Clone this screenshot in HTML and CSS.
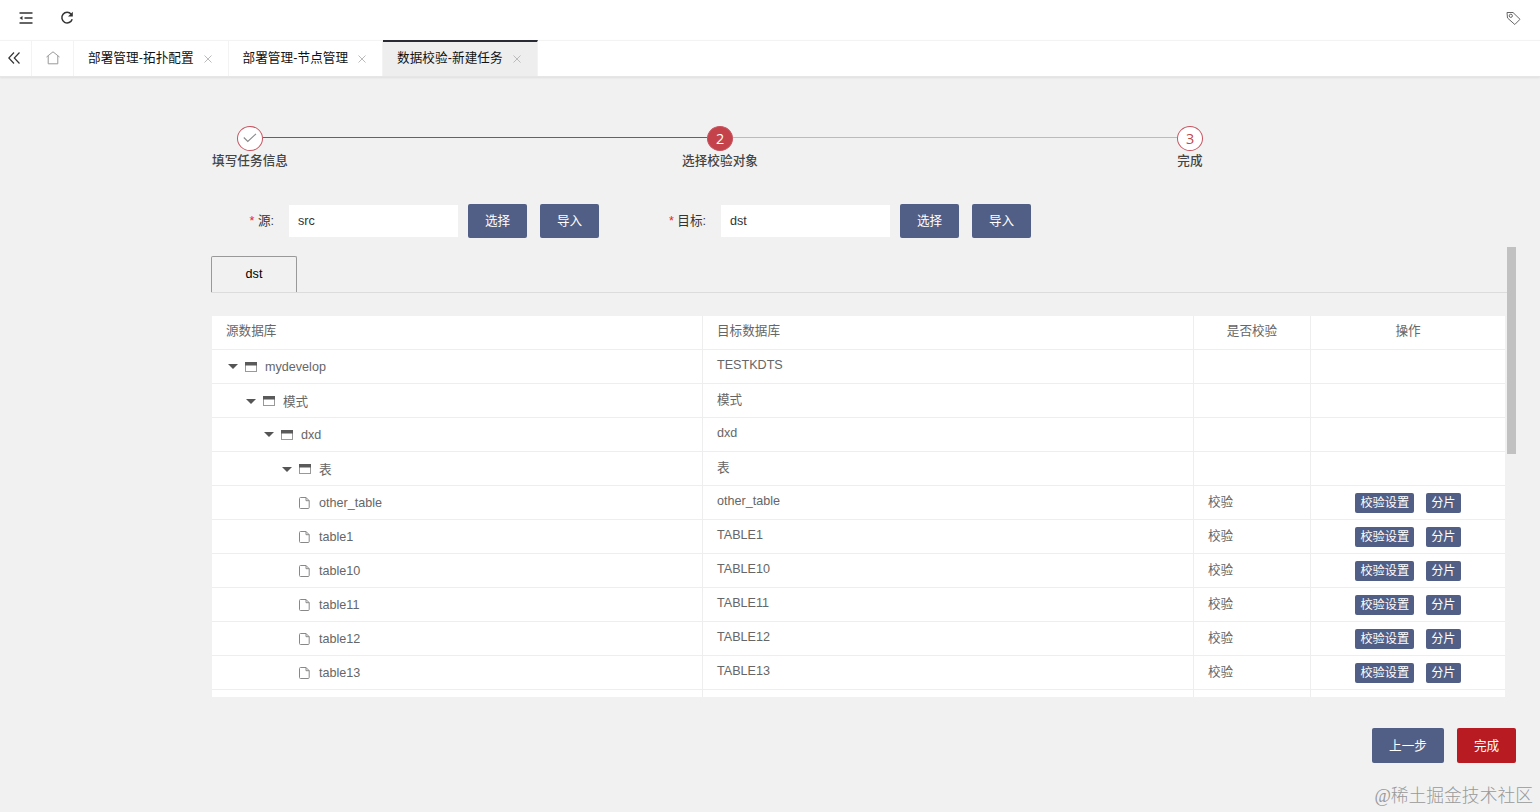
FILE: index.html
```html
<!DOCTYPE html>
<html lang="zh-CN">
<head>
    <meta charset="UTF-8">
    <meta name="viewport" content="width=device-width, initial-scale=1.0">
    <title>数据校验-新建任务</title>
    <link rel="stylesheet" href="styles.css">
</head>
<body>
    <!-- shared icons -->
    <svg class="sprite" width="0" height="0">
        <symbol id="icon-folder" viewBox="0 0 12 10">
            <rect x="0.5" y="0.5" width="11" height="9" fill="none" stroke="#999"/>
            <rect x="0" y="0" width="12" height="3.5" fill="#5a5a5a"/>
        </symbol>
        <symbol id="icon-file" viewBox="0 0 11 12">
            <path d="M1.5 .5H7L10.2 3.7V10.5Q10.2 11.5 9.2 11.5H1.5Q.5 11.5 .5 10.5V1.5Q.5 .5 1.5 .5ZM7 .5V3.7H10.2" fill="none" stroke="#888"/>
        </symbol>
        <symbol id="icon-close" viewBox="0 0 8 8">
            <path d="M.5 .5L7.5 7.5M7.5 .5L.5 7.5" fill="none" stroke="#bbb"/>
        </symbol>
    </svg>

    <header class="header">
        <svg class="icon-menu" width="14" height="12" viewBox="0 0 14 12"><path d="M.5 1H13.5M5.5 6H13.5M.5 11H13.5" fill="none" stroke="#333" stroke-width="1.4"/><path d="M.5 6L3.5 4V8Z" fill="#333"/></svg>
        <svg class="icon-refresh" width="14" height="14" viewBox="0 0 14 14"><path d="M11.2 3.2A5.3 5.3 0 1 0 12.2 8.3" fill="none" stroke="#333" stroke-width="1.5"/><path d="M12.8 .8V5.6H8Z" fill="#333"/></svg>
        <svg class="icon-tag" width="15" height="15" viewBox="0 0 15 15"><path d="M1 1.5H7L14 8.3L8.8 13.5L1.5 7Z" fill="none" stroke="#666" stroke-linejoin="round"/><circle cx="4.8" cy="4.8" r="1.6" fill="none" stroke="#666"/></svg>
    </header>

    <nav class="page-tabs">
        <a class="tab-control"><svg width="12" height="12" viewBox="0 0 12 12"><path d="M6 .5L.8 6L6 11.5M11.5 .5L6.3 6L11.5 11.5" fill="none" stroke="#333" stroke-width="1.2"/></svg></a>
        <a class="tab-home"><svg width="14" height="14" viewBox="0 0 14 14"><path d="M.5 6L7 .8L13.5 6M2.2 5V12.8H11.8V5" fill="none" stroke="#999"/></svg></a>
        <a class="page-tab">部署管理-拓扑配置<svg class="close"><use href="#icon-close"/></svg></a>
        <a class="page-tab">部署管理-节点管理<svg class="close"><use href="#icon-close"/></svg></a>
        <a class="page-tab active">数据校验-新建任务<svg class="close"><use href="#icon-close"/></svg></a>
    </nav>

    <main>
        <div class="steps">
            <div class="step">
                <span class="step-num"><svg width="14" height="10" viewBox="0 0 14 10"><path d="M.8 4.5L4.8 8.5L13 .8" fill="none" stroke="#888" stroke-width="1.1"/></svg></span>
                <span class="step-title">填写任务信息</span>
            </div>
            <div class="step-line done"></div>
            <div class="step">
                <span class="step-num current">2</span>
                <span class="step-title">选择校验对象</span>
            </div>
            <div class="step-line"></div>
            <div class="step">
                <span class="step-num">3</span>
                <span class="step-title">完成</span>
            </div>
        </div>

        <form class="form">
            <div class="form-item">
                <label><i>*</i> 源:</label>
                <input type="text" value="src">
                <button type="button" class="btn">选择</button>
                <button type="button" class="btn">导入</button>
            </div>
            <div class="form-item">
                <label><i>*</i> 目标:</label>
                <input type="text" value="dst">
                <button type="button" class="btn">选择</button>
                <button type="button" class="btn">导入</button>
            </div>
        </form>

        <div class="scroll-area">
            <div class="scroll-content">
                <div class="db-tabs"><span class="db-tab">dst</span></div>
                <div class="table">
                    <div class="row head">
                        <div>源数据库</div><div>目标数据库</div><div>是否校验</div><div>操作</div>
                    </div>
                    <div class="row">
                        <div class="tree level-0"><span class="arrow"></span><svg class="folder"><use href="#icon-folder"/></svg>mydevelop</div>
                        <div>TESTKDTS</div><div></div><div></div>
                    </div>
                    <div class="row cjk">
                        <div class="tree level-1"><span class="arrow"></span><svg class="folder"><use href="#icon-folder"/></svg><span>模式</span></div>
                        <div>模式</div><div></div><div></div>
                    </div>
                    <div class="row">
                        <div class="tree level-2"><span class="arrow"></span><svg class="folder"><use href="#icon-folder"/></svg>dxd</div>
                        <div>dxd</div><div></div><div></div>
                    </div>
                    <div class="row cjk">
                        <div class="tree level-3"><span class="arrow"></span><svg class="folder"><use href="#icon-folder"/></svg><span>表</span></div>
                        <div>表</div><div></div><div></div>
                    </div>
                    <div class="row">
                        <div class="tree level-4"><svg class="file"><use href="#icon-file"/></svg>other_table</div>
                        <div>other_table</div><div>校验</div>
                        <div class="actions"><button class="btn-xs">校验设置</button><button class="btn-xs">分片</button></div>
                    </div>
                    <div class="row">
                        <div class="tree level-4"><svg class="file"><use href="#icon-file"/></svg>table1</div>
                        <div>TABLE1</div><div>校验</div>
                        <div class="actions"><button class="btn-xs">校验设置</button><button class="btn-xs">分片</button></div>
                    </div>
                    <div class="row">
                        <div class="tree level-4"><svg class="file"><use href="#icon-file"/></svg>table10</div>
                        <div>TABLE10</div><div>校验</div>
                        <div class="actions"><button class="btn-xs">校验设置</button><button class="btn-xs">分片</button></div>
                    </div>
                    <div class="row">
                        <div class="tree level-4"><svg class="file"><use href="#icon-file"/></svg>table11</div>
                        <div>TABLE11</div><div>校验</div>
                        <div class="actions"><button class="btn-xs">校验设置</button><button class="btn-xs">分片</button></div>
                    </div>
                    <div class="row">
                        <div class="tree level-4"><svg class="file"><use href="#icon-file"/></svg>table12</div>
                        <div>TABLE12</div><div>校验</div>
                        <div class="actions"><button class="btn-xs">校验设置</button><button class="btn-xs">分片</button></div>
                    </div>
                    <div class="row">
                        <div class="tree level-4"><svg class="file"><use href="#icon-file"/></svg>table13</div>
                        <div>TABLE13</div><div>校验</div>
                        <div class="actions"><button class="btn-xs">校验设置</button><button class="btn-xs">分片</button></div>
                    </div>
                    <div class="row"><div></div><div></div><div></div><div></div></div>
                </div>
            </div>
            <div class="scrollbar"></div>
        </div>

        <div class="footer">
            <button class="btn">上一步</button>
            <button class="btn btn-red">完成</button>
        </div>
    </main>
    <div class="watermark">@稀土掘金技术社区</div>
</body>
</html>
```
FILE: styles.css
```css
* {
    box-sizing: border-box;
}
body {
    margin: 0;
    height: 812px;
    overflow: hidden;
    background-color: #f1f1f1;
    color: #333;
    font-family: "Liberation Sans", "Noto Sans CJK SC", sans-serif;
    font-size: 12.6px;
}
svg {
    display: block;
    flex: none;
}
.sprite {
    position: absolute;
}
button, input {
    font-family: inherit;
    font-size: inherit;
    border: none;
    padding: 0;
}

/* top bar */
.header {
    display: flex;
    align-items: center;
    height: 40px;
    padding: 0 19px;
    padding-bottom: 4px;
    background-color: #fff;
}
.icon-refresh {
    margin-left: 27px;
}
.icon-tag {
    margin-left: auto;
}
.page-tabs {
    display: flex;
    height: 37px;
    background-color: #fff;
    border-top: 1px solid #f3f3f3;
    border-bottom: 1px solid #e6e6e6;
    box-shadow: 0 1px 2px rgba(0, 0, 0, 0.08);
    color: #111;
}
.page-tabs a {
    display: flex;
    align-items: center;
    border-right: 1px solid #f3f3f3;
}
.page-tabs .tab-control {
    width: 32px;
    padding: 0 0 2px 8px;
}
.page-tabs .tab-home {
    width: 42px;
    padding: 0 0 2px 14px;
}
.page-tab {
    width: 154.5px;
    padding-left: 14px;
    padding-bottom: 4px;
    letter-spacing: 0.08px;
}
.page-tabs .active {
    background-color: #eee;
    margin-top: -1px;
    padding-bottom: 5px;
    border-top: 2px solid #292b34;
}
.close {
    width: 8px;
    height: 8px;
    margin: 4px 0 0 10px;
}

/* steps */
.steps {
    display: flex;
    width: 1018px;
    margin: 49px 0 0 211px;
}
.step {
    display: flex;
    flex-direction: column;
    align-items: center;
    width: 78px;
}
.step-num {
    display: flex;
    align-items: center;
    justify-content: center;
    width: 26px;
    height: 25px;
    padding-bottom: 1px;
    border: 1px solid #c6535f;
    border-radius: 50%;
    background-color: #fff;
    color: #bd4a4a;
    font: 14.4px "Open Sans", sans-serif;
}
.step-num.current {
    background-color: #c4434a;
    color: #fff;
}
.step-title {
    margin-top: 1px;
    line-height: 18px;
    font-weight: 500;
    letter-spacing: 0.08px;
    color: #444;
}
.step-line {
    flex: 1;
    height: 1px;
    margin: 11px -26px 0;
    background-color: #bbb;
}
.step-line.done {
    background-color: #bf3a41;
}

/* form */
.form {
    display: flex;
    gap: 49px;
    margin: 34px 0 0 211px;
}
.form-item {
    display: flex;
    align-items: center;
    height: 34px;
}
.form-item label {
    width: 63px;
    margin-right: 15px;
    padding-bottom: 4px;
    text-align: right;
    white-space: nowrap;
}
.form-item + .form-item label {
    width: 58px;
}
.form-item i {
    color: #e22;
    font-style: normal;
}
.form-item input {
    width: 169px;
    height: 32px;
    margin-right: 10px;
    padding-left: 9px;
    background-color: #fff;
    color: #333;
}
.btn {
    width: 59px;
    height: 34px;
    padding-bottom: 3px;
    border-radius: 2px;
    background-color: #515f86;
    color: #fff;
}
.btn + .btn {
    margin-left: 13px;
}

/* table */
.scroll-area {
    display: flex;
    height: 450px;
    margin: 9px 0 0 211px;
}
.scroll-content {
    width: 1296px;
    overflow: hidden;
}
.scrollbar {
    width: 9px;
    height: 207px;
    background-color: #c1c1c1;
}
.db-tabs {
    height: 37px;
    margin: 9px 0 23px;
    border-bottom: 1px solid #dcdcdc;
}
.db-tab {
    display: block;
    width: 86px;
    height: 36px;
    border: 1px solid #999;
    border-bottom: none;
    border-radius: 2px 2px 0 0;
    line-height: 34px;
    text-align: center;
    color: #000;
}
.table {
    width: 1294px;
    margin-left: 1px;
    color: #666;
}
.row {
    display: grid;
    grid-template-columns: 491px 491px 117px 194px;
    width: 1293px;
    height: 34px;
    background-color: #fff;
    border-bottom: 1px solid #eee;
}
.row > div {
    padding-left: 14px;
    border-right: 1px solid #eee;
    line-height: 31px;
}
.row > div:last-child {
    border-right: none;
}
.row > div:nth-child(3),
.cjk > div:nth-child(2),
.cjk .tree span:last-child {
    padding-top: 1px;
}
.head > div:nth-child(n) {
    padding-top: 0;
}
.head > div:nth-child(n+3) {
    padding-left: 0;
    text-align: center;
}
.row .tree {
    display: flex;
    align-items: center;
    padding-top: 2px;
}
.row .level-0 { padding-left: 16px; }
.row .level-1 { padding-left: 34px; }
.row .level-2 { padding-left: 52px; }
.row .level-3 { padding-left: 70px; }
.row .level-4 { padding-left: 87px; }
.arrow {
    border: 5px solid transparent;
    border-top-color: #555;
    border-bottom: none;
    margin: 0 7px 2px 0;
}
.folder {
    width: 12px;
    height: 10px;
    margin: 0 8px 2px 0;
}
.file {
    width: 11px;
    height: 12px;
    margin: 0 9px 2px 0;
}
.row .actions {
    display: flex;
    align-items: center;
    justify-content: center;
    gap: 12px;
    padding: 1px 0 0;
}
.btn-xs {
    height: 20px;
    padding: 0 5px;
    border-radius: 2px;
    background-color: #515f86;
    color: #fff;
    font-size: 12.2px;
    line-height: 20px;
}

.footer {
    display: flex;
    justify-content: flex-end;
    margin: 31px 24px 0 0;
}
.footer .btn {
    width: 72px;
    height: 35px;
}
.footer .btn-red {
    width: 59px;
    background-color: #b81c22;
}
.watermark {
    position: absolute;
    right: 7px;
    bottom: 3px;
    color: #999;
    font: 300 17.8px/26px "Liberation Serif", "Noto Sans CJK SC", serif;
}
```
